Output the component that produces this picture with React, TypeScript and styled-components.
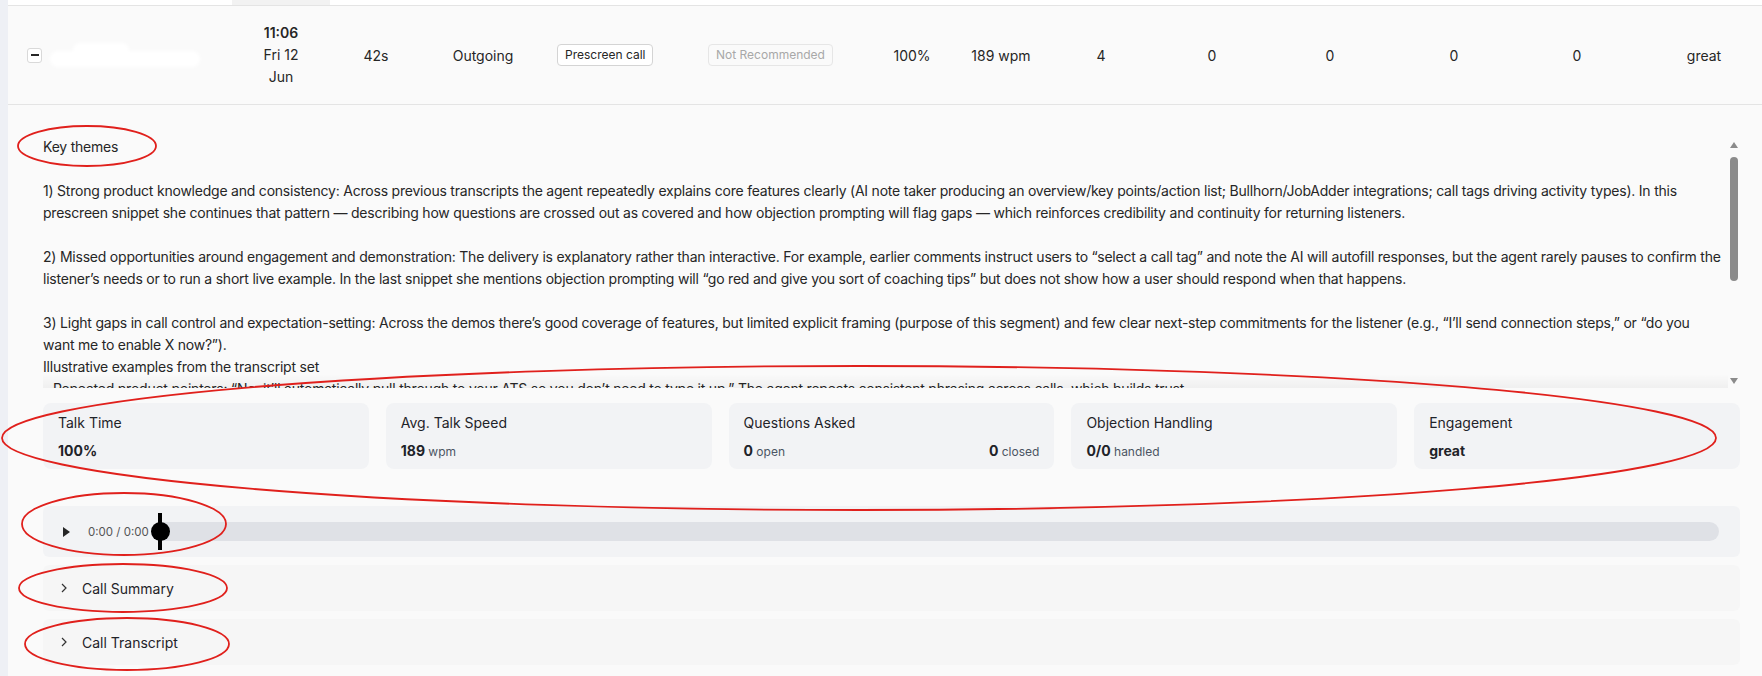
import React from "react";
import styled, { createGlobalStyle } from "styled-components";

const GlobalStyle = createGlobalStyle`
  html, body {
    margin: 0;
    padding: 0;
  }
  body {
    background: #eef0f5;
    font-family: Inter, "Noto Sans", sans-serif;
    color: #262626;
  }
`;

const COLS =
    "37px 187px 98px 92px 122px 151px 165px 104px 74px 126px 96px 140px 108px 138px 1fr";

const Root = styled.div`
    position: relative;
    width: 1762px;
    height: 676px;
    overflow: hidden;
`;

const Page = styled.div`
    margin-left: 8px;
    height: 676px;
    background: #fafafa;
    display: flex;
    flex-direction: column;
`;

const HeaderStrip = styled.div`
    display: grid;
    grid-template-columns: ${COLS};
    height: 5px;
    background: #fff;
    border-bottom: 1px solid #e4e4e4;
`;

const HeaderCell = styled.div<{ $sorted?: boolean }>`
    background: ${(p) => (p.$sorted ? "#f2f2f2" : "transparent")};
`;

const DataRow = styled.div`
    display: grid;
    grid-template-columns: ${COLS};
    align-items: center;
    height: 98px;
    border-bottom: 1px solid #e4e4e4;
    font-size: 14px;
    color: #262626;
`;

const Cell = styled.div<{ $align?: "left" | "center" }>`
    text-align: ${(p) => p.$align || "center"};
    padding-left: ${(p) => (p.$align === "left" ? "13px" : "0")};
`;

const NameCell = styled.div`
    display: flex;
    align-items: center;
    padding-top: 4px;
`;

const ExpandCell = styled.div`
    display: flex;
    padding-left: 19px;
`;

const ExpandButton = styled.div`
    width: 15px;
    height: 15px;
    box-sizing: border-box;
    border: 1px solid #d9d9d9;
    border-radius: 3px;
    background: #fff;
    display: flex;
    align-items: center;
    justify-content: center;

    &::before {
        content: "";
        width: 8px;
        height: 1.5px;
        background: #262626;
    }
`;

const TimeCell = styled.div`
    text-align: center;
    line-height: 22px;

    b {
        font-weight: 600;
    }
`;

const Tag = styled.span<{ $muted?: boolean }>`
    display: inline-block;
    font-size: 12px;
    line-height: 20px;
    padding: 0 7px;
    border-radius: 4px;
    border: 1px solid ${(p) => (p.$muted ? "#e6e6e6" : "#d4d4d4")};
    color: ${(p) => (p.$muted ? "#a8a8a8" : "#262626")};
    background: ${(p) => (p.$muted ? "#fafafa" : "#fff")};
`;

const Expanded = styled.div`
    display: flex;
    flex-direction: column;
    padding: 31px 22px 0 35px;
`;

const ThemesWrap = styled.div`
    display: flex;
    height: 252px;
`;

const ThemesBox = styled.div`
    position: relative;
    flex: 1;
    min-width: 0;
    overflow-x: visible;
    overflow-y: clip;
    font-size: 14px;
    letter-spacing: -0.22px;
    line-height: 22px;
    white-space: pre;
    color: #262626;

    &::after {
        content: "";
        position: absolute;
        left: 0;
        right: 0;
        bottom: 0;
        height: 14px;
        background: linear-gradient(rgba(250, 250, 250, 0), rgba(0, 0, 0, 0.045));
        pointer-events: none;
    }
`;

const Rail = styled.div`
    width: 12px;
    flex-shrink: 0;
    display: flex;
    flex-direction: column;
    align-items: center;
    padding: 6px 0 4px;
    box-sizing: border-box;
`;

const RailThumb = styled.div`
    margin-top: 9px;
    width: 8px;
    height: 124px;
    border-radius: 4px;
    background: #8b8b8b;
`;

const RailSpacer = styled.div`
    flex: 1;
`;

const Cards = styled.div`
    display: grid;
    grid-template-columns: repeat(5, 1fr);
    gap: 17px;
    margin-top: 15px;
`;

const Card = styled.div`
    height: 66px;
    box-sizing: border-box;
    padding: 10px 15px 0;
    background: #f2f3f5;
    border-radius: 8px;
    display: flex;
    flex-direction: column;
    gap: 8px;
`;

const CardLabel = styled.div`
    font-size: 14px;
    line-height: 20px;
    color: #1f2329;
`;

const CardValue = styled.div`
    display: flex;
    justify-content: space-between;
    font-size: 14px;
    line-height: 20px;
    font-weight: 700;
    color: #1f2329;

    small {
        font-size: 12px;
        font-weight: 400;
        color: #4b5563;
    }
`;

const Player = styled.div`
    margin-top: 37px;
    height: 51px;
    box-sizing: border-box;
    padding: 0 21px 0 20px;
    background: #f2f3f5;
    border-radius: 6px;
    display: flex;
    align-items: center;
`;

const PlayIcon = styled.div`
    width: 0;
    height: 0;
    border-top: 5px solid transparent;
    border-bottom: 5px solid transparent;
    border-left: 7px solid #262626;
`;

const TimeText = styled.span`
    margin-left: 18px;
    font-size: 11.5px;
    color: #555;
`;

const Track = styled.div`
    position: relative;
    flex: 1;
    height: 19px;
    margin-left: 2px;
    border-radius: 10px;
    background: #dfe1e6;
`;

const Thumb = styled.div`
    position: absolute;
    left: 0;
    top: 0;
    width: 19px;
    height: 19px;
    border-radius: 50%;
    background: #000;

    &::after {
        content: "";
        position: absolute;
        left: 7.5px;
        top: -9px;
        width: 4px;
        height: 37px;
        background: #000;
    }
`;

const Accordion = styled.div`
    margin-top: 8px;
    height: 46px;
    box-sizing: border-box;
    padding-left: 16px;
    background: #f6f6f6;
    border-radius: 6px;
    display: flex;
    align-items: center;
    gap: 13px;
    font-size: 14px;
    color: #1f2329;
`;

const Overlay = styled.svg`
    position: absolute;
    left: 0;
    top: 0;
    pointer-events: none;
`;

const themes = `Key themes

1) Strong product knowledge and consistency: Across previous transcripts the agent repeatedly explains core features clearly (AI note taker producing an overview/key points/action list; Bullhorn/JobAdder integrations; call tags driving activity types). In this
prescreen snippet she continues that pattern — describing how questions are crossed out as covered and how objection prompting will flag gaps — which reinforces credibility and continuity for returning listeners.

2) Missed opportunities around engagement and demonstration: The delivery is explanatory rather than interactive. For example, earlier comments instruct users to “select a call tag” and note the AI will autofill responses, but the agent rarely pauses to confirm the
listener’s needs or to run a short live example. In the last snippet she mentions objection prompting will “go red and give you sort of coaching tips” but does not show how a user should respond when that happens.

3) Light gaps in call control and expectation-setting: Across the demos there’s good coverage of features, but limited explicit framing (purpose of this segment) and few clear next-step commitments for the listener (e.g., “I’ll send connection steps,” or “do you
want me to enable X now?”).
Illustrative examples from the transcript set
- Repeated product pointers: “No, it’ll automatically pull through to your ATS so you don’t need to type it up.” The agent repeats consistent phrasing across calls, which builds trust.
- Missed check-in: after explaining call tags she moves straight on without asking whether the listener already uses tags in their workflow.
- Coaching prompt: “it’ll go red and give you sort of coaching tips” is described but never demonstrated on screen.`;

function Chevron() {
    return (
        <svg width="10" height="10" viewBox="0 0 10 10">
            <polyline points="3,1 7,5 3,9" fill="none" stroke="#333" strokeWidth="1.2" />
        </svg>
    );
}

function RailArrow({ down }: { down?: boolean }) {
    return (
        <svg width="8" height="6" viewBox="0 0 8 6">
            <polygon points={down ? "0,0 8,0 4,6" : "0,6 8,6 4,0"} fill="#8b8b8b" />
        </svg>
    );
}

function NameBlur() {
    return (
        <svg width="160" height="40" viewBox="0 0 160 40">
            <defs>
                <filter id="soft" x="-20%" y="-50%" width="140%" height="200%">
                    <feGaussianBlur stdDeviation="1.6" />
                </filter>
            </defs>
            <g fill="#fff" filter="url(#soft)">
                <rect x="5" y="14" width="150" height="16" rx="8" />
                <rect x="28" y="6" width="56" height="14" rx="7" />
            </g>
        </svg>
    );
}

const stats = [
    { label: "Talk Time", value: <span>100%</span> },
    { label: "Avg. Talk Speed", value: <span>189 <small>wpm</small></span> },
    {
        label: "Questions Asked",
        value: (
            <>
                <span>0 <small>open</small></span>
                <span>0 <small>closed</small></span>
            </>
        ),
    },
    { label: "Objection Handling", value: <span>0/0 <small>handled</small></span> },
    { label: "Engagement", value: <span>great</span> },
];

export default function App() {
    return (
        <Root>
            <GlobalStyle />
            <Page>
                <HeaderStrip>
                    <HeaderCell />
                    <HeaderCell />
                    <HeaderCell $sorted />
                </HeaderStrip>
                <DataRow>
                    <ExpandCell>
                        <ExpandButton />
                    </ExpandCell>
                    <NameCell>
                        <NameBlur />
                    </NameCell>
                    <TimeCell>
                        <b>11:06</b>
                        <br />
                        Fri 12
                        <br />
                        Jun
                    </TimeCell>
                    <Cell>42s</Cell>
                    <Cell>Outgoing</Cell>
                    <Cell $align="left">
                        <Tag>Prescreen call</Tag>
                    </Cell>
                    <Cell $align="left">
                        <Tag $muted>Not Recommended</Tag>
                    </Cell>
                    <Cell>100%</Cell>
                    <Cell>189 wpm</Cell>
                    <Cell>4</Cell>
                    <Cell>0</Cell>
                    <Cell>0</Cell>
                    <Cell>0</Cell>
                    <Cell>0</Cell>
                    <Cell>great</Cell>
                </DataRow>
                <Expanded>
                    <ThemesWrap>
                        <ThemesBox>{themes}</ThemesBox>
                        <Rail>
                            <RailArrow />
                            <RailThumb />
                            <RailSpacer />
                            <RailArrow down />
                        </Rail>
                    </ThemesWrap>
                    <Cards>
                        {stats.map((s) => (
                            <Card key={s.label}>
                                <CardLabel>{s.label}</CardLabel>
                                <CardValue>{s.value}</CardValue>
                            </Card>
                        ))}
                    </Cards>
                    <Player>
                        <PlayIcon />
                        <TimeText>0:00 / 0:00</TimeText>
                        <Track>
                            <Thumb />
                        </Track>
                    </Player>
                    <Accordion>
                        <Chevron />
                        Call Summary
                    </Accordion>
                    <Accordion>
                        <Chevron />
                        Call Transcript
                    </Accordion>
                </Expanded>
            </Page>
            <Overlay width="1762" height="676" viewBox="0 0 1762 676">
                <g fill="none" stroke="#e0201c" strokeWidth="1.8">
                    <ellipse cx="87" cy="146" rx="69" ry="20" />
                    <ellipse cx="859" cy="438" rx="857" ry="72" />
                    <ellipse cx="124" cy="524" rx="102" ry="31" />
                    <ellipse cx="123" cy="588" rx="104" ry="24" />
                    <ellipse cx="127" cy="644" rx="102" ry="26" />
                </g>
            </Overlay>
        </Root>
    );
}
